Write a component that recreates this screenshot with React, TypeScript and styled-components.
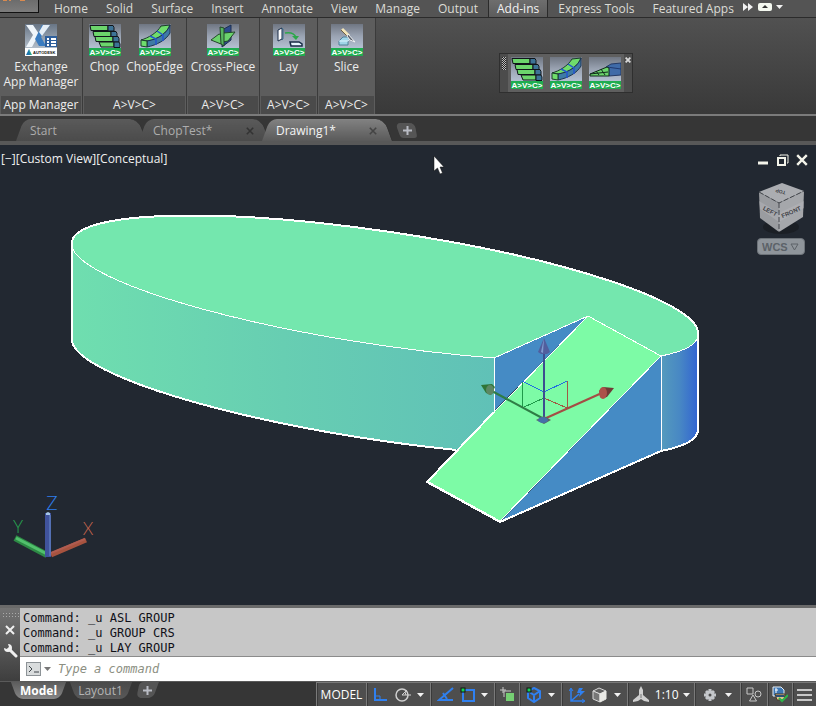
import React from "react";
import styled, { createGlobalStyle, css } from "styled-components";

const UI = `"Open Sans", "Noto Sans", sans-serif`;

const GlobalStyle = createGlobalStyle`
  * { box-sizing: border-box; }
  body { margin: 0; background: #363636; }
  button, input, select { font: inherit; color: inherit; border: 0; padding: 0; margin: 0; background: none; }
`;

const Page = styled.div`
  display: flex;
  flex-direction: column;
  min-height: 100vh;
  overflow: hidden;
  background: #363636;
  color: #e6e6e6;
  font-family: ${UI};
  font-size: 12px;
  line-height: 15px;
`;

/* ---------- ribbon tabs ---------- */

const MenuBar = styled.nav`
  display: flex;
  align-items: stretch;
  height: 18px;
  margin-bottom: -1px;
  background: #545454;
  border-bottom: 1px solid #2b2b2b;
`;

const AppButton = styled.button`
  display: flex;
  align-items: flex-start;
  width: 39px;
  height: 13px;
  margin-right: 6px;
  background: linear-gradient(#6c6c6c, #7c7c7c);
  border: solid #111;
  border-width: 0 1px 1px 0;
`;

const MenuTab = styled.button<{ $active?: boolean }>`
  padding: 0 9px;
  line-height: 17px;
  white-space: nowrap;
  color: #dcdcd6;
  ${(p) =>
    p.$active &&
    css`
      padding: 0 8px;
      margin: 0 1px;
      color: #f2f2f2;
      background: linear-gradient(#6e6e6e, #5c5c5c);
      border: solid #2b2b2b;
      border-width: 0 1px;
    `}
`;

const MenuTool = styled.button`
  display: flex;
  align-items: center;
  padding: 0 1px 4px 0;
`;

/* ---------- ribbon panels ---------- */

const Ribbon = styled.section`
  position: relative;
  display: flex;
  height: 97px;
  background: linear-gradient(#515151, #393939);
  border-top: 1px solid #2b2b2b;
`;

const Panel = styled.section<{ $w: number }>`
  display: flex;
  flex-direction: column;
  width: ${(p) => p.$w}px;
  background: #5d5d5d;
  border-right: 1px solid #3b3b3b;
`;

const PanelTools = styled.div`
  display: flex;
  flex: 1;
  justify-content: center;
  padding-top: 6px;
`;

const PanelTitle = styled.div`
  height: 18px;
  margin: 0 1px;
  line-height: 18px;
  text-align: center;
  white-space: nowrap;
  color: #ececec;
  background: #4a4a4a;
`;

const Tool = styled.button<{ $w?: number }>`
  display: flex;
  flex-direction: column;
  align-items: center;
  align-self: flex-start;
  gap: 3px;
  width: ${(p) => (p.$w ? p.$w + "px" : "auto")};
  line-height: 15px;
  white-space: pre;
  color: #ececec;
  svg { display: block; }
`;

const Palette = styled.div`
  position: absolute;
  left: 499px;
  top: 35px;
  display: flex;
  width: 134px;
  height: 40px;
  background: #5f5f5f;
  border: 1px solid #2f2f2f;
`;

const Grip = styled.div`
  width: 8px;
  padding: 3px 2px;
  background: #4c4c4c;
`;

const GripDots = styled.div`
  height: 13px;
  background: repeating-conic-gradient(#bdbdbd 0 25%, #222 0 50%) 0 0 / 2px 2px;
`;

const PaletteTools = styled.div`
  display: flex;
  flex: 1;
  gap: 7px;
  padding: 3px;
  svg { display: block; }
`;

const PaletteClose = styled.button`
  display: flex;
  width: 8px;
  padding-top: 3px;
  justify-content: center;
  background: #4c4c4c;
`;

/* ---------- document tabs ---------- */

const DocTabs = styled.nav`
  display: flex;
  align-items: flex-end;
  height: 31px;
  padding-left: 20px;
  background: #363636;
  border-top: 2px solid #7b7b7b;
  border-bottom: 4px solid #585858;
`;

const skewed = (bg: string, edge: string) => css`
  position: relative;
  isolation: isolate;
  &::before, &::after {
    content: "";
    position: absolute;
    z-index: -1;
    top: 0;
    bottom: 0;
    background: ${bg};
  }
  &::before { left: 0; right: 30%; ${edge} }
  &::after { left: 30%; right: 0; }
`;

const DocTab = styled.div<{ $active?: boolean }>`
  display: flex;
  align-items: center;
  justify-content: space-between;
  width: 123px;
  height: 22px;
  padding: 1px 10px 0 10px;
  color: ${(p) => (p.$active ? "#f4f4f4" : "#adadad")};
  ${(p) =>
    skewed(
      p.$active ? "linear-gradient(#828282, #5a5a5a)" : "linear-gradient(#5a5a5a, #4b4b4b)",
      "transform: skewX(-20deg); border-radius: 7px 0 0 0;"
    )}
  &::after { transform: skewX(20deg); border-radius: 0 9px 0 0; border-right: 1px solid #333; }
`;

const DocClose = styled.button`
  display: flex;
  padding: 2px;
`;

const AddDoc = styled.button`
  display: flex;
  align-items: center;
  justify-content: center;
  width: 18px;
  height: 15px;
  margin: 0 0 3px 9px;
  ${skewed("#555", "transform: skewX(20deg); border-radius: 5px 0 0 3px;")}
  &::after { transform: skewX(10deg); border-radius: 0 5px 3px 0; }
`;

/* ---------- viewport ---------- */

const Viewport = styled.main`
  position: relative;
  display: flex;
  flex: 1;
  min-height: 460px;
  background: #222831;
`;

const Scene = styled.svg`
  flex: 1;
  min-width: 0;
`;

const ViewLabels = styled.div`
  position: absolute;
  left: 1px;
  top: 6px;
  display: flex;
  color: #f0f0f0;
`;

const WindowTools = styled.div`
  position: absolute;
  right: 8px;
  top: 9px;
  display: flex;
  gap: 7px;
  button { display: flex; }
`;

const CubeBox = styled.div`
  position: absolute;
  right: 11px;
  top: 36px;
  display: flex;
  flex-direction: column;
  align-items: center;
  gap: 3px;
`;

const WcsField = styled.label`
  display: flex;
  align-items: center;
  width: 48px;
  height: 17px;
  padding: 0 5px 0 4px;
  border: 1px solid #6d7379;
  border-radius: 4px;
  background: #8f959b;
  color: #5c6268;
  font: bold 11px "Liberation Sans", sans-serif;
  svg { flex: none; }
`;

const WcsSelect = styled.select`
  flex: 1;
  min-width: 0;
  appearance: none;
`;

const Ucs = styled.svg`
  position: absolute;
  left: 8px;
  bottom: 42px;
`;

/* ---------- command line ---------- */

const CommandPanel = styled.section`
  display: flex;
  height: 76px;
  border-top: 3px solid #6a6a6a;
  color: #101018;
  font-family: "DejaVu Sans Mono", "Liberation Mono", monospace;
`;

const CommandSide = styled.div`
  display: flex;
  flex-direction: column;
  align-items: center;
  gap: 8px;
  width: 20px;
  padding-top: 4px;
  background: linear-gradient(#747474, #3e3e3e);
  button { display: flex; }
`;

const SideDots = styled.div`
  width: 17px;
  height: 5px;
  background: radial-gradient(#aaa 1px, transparent 1px) 0 0 / 3px 3px;
`;

const CommandMain = styled.div`
  display: flex;
  flex: 1;
  flex-direction: column;
`;

const History = styled.div`
  height: 49px;
  padding: 3px 3px 0;
  background: #c7c7c7;
  border-bottom: 1px solid #8b8b8b;
  white-space: pre;
`;

const Prompt = styled.form`
  display: flex;
  flex: 1;
  align-items: center;
  gap: 3px;
  padding-left: 6px;
  background: #fff;
  button { display: flex; align-items: center; gap: 3px; }
`;

const PromptInput = styled.input`
  flex: 1;
  min-width: 0;
  padding-left: 4px;
  font-style: italic;
  outline: 0;
  &::placeholder { color: #8c8f82; opacity: 1; }
`;

/* ---------- bottom bar ---------- */

const Bottom = styled.footer`
  display: flex;
  align-items: flex-start;
  height: 25px;
  padding-left: 14px;
  background: #363636;
  border-top: 1px solid #5a5a5a;
`;

const LayoutTab = styled.button<{ $active?: boolean; $w: number }>`
  width: ${(p) => p.$w}px;
  height: 17px;
  margin-right: 10px;
  line-height: 16px;
  font-weight: ${(p) => (p.$active ? 700 : 400)};
  color: ${(p) => (p.$active ? "#fff" : "#b4b4b4")};
  ${(p) =>
    skewed(
      p.$active ? "linear-gradient(#5c5c5c, #868686)" : "linear-gradient(#4a4a4a, #585858)",
      "transform: skewX(20deg); border-radius: 0 0 0 6px;"
    )}
  &::after { transform: skewX(-20deg); border-radius: 0 0 6px 0; }
`;

const AddLayout = styled.button`
  display: flex;
  align-items: center;
  justify-content: center;
  width: 18px;
  height: 16px;
  ${skewed("#555", "transform: skewX(-12deg); border-radius: 4px 0 0 5px;")}
  &::after { transform: skewX(-20deg); border-radius: 0 0 5px 0; }
`;

const Status = styled.div`
  display: flex;
  align-self: stretch;
  margin-left: auto;
  background: #4e4e4e;
  border-top: 1px solid #7a7a7a;
`;

const StatusCell = styled.div<{ $w: number }>`
  display: flex;
  align-items: center;
  justify-content: space-evenly;
  width: ${(p) => p.$w}px;
  border: solid #7a7a7a;
  border-width: 0 0 0 1px;
  box-shadow: inset 1px 0 #3a3a3a;
  color: #fff;
  font-size: 12px;
  button { display: flex; align-items: center; gap: 4px; }
`;

/* ---------- drawings ---------- */

const Plus = () => (
  <svg width="9" height="9" viewBox="0 0 9 9">
    <path d="M4.500 0v9M0 4.500h9" stroke="#b9bcc4" strokeWidth="2" />
  </svg>
);

const Cross = ({ size, color, w = 2 }: { size: number; color: string; w?: number }) => (
  <svg width={size} height={size} viewBox="0 0 10 10">
    <path d="M1 1l8 8M9 1l-8 8" stroke={color} strokeWidth={w} />
  </svg>
);

const Caret = ({ color = "#f2f2f2" }: { color?: string }) => (
  <svg width="7" height="4" viewBox="0 0 7 4">
    <path d="M0 0h7L3.500 4z" fill={color} />
  </svg>
);

const Tile = ({ id, children }: { id: string; children: React.ReactNode }) => (
  <svg width="32" height="32" viewBox="0 0 32 32">
    <defs>
      <linearGradient id={id} x1="0" y1="0" x2="0" y2="1">
        <stop offset="0" stopColor="#6f7682" />
        <stop offset="0.5" stopColor="#9aa3b2" />
        <stop offset="1" stopColor="#b4c0d2" />
      </linearGradient>
    </defs>
    <rect width="32" height="24" fill={`url(#${id})`} />
    {children}
    <rect y="24" width="32" height="8" fill="#1fac50" />
    <text x="16" y="31" textAnchor="middle" fill="#fff" fontFamily="Liberation Sans, sans-serif" fontSize="8" fontWeight="700">
      A&gt;V&gt;C&gt;
    </text>
  </svg>
);

const ChopIcon = ({ id }: { id: string }) => (
  <Tile id={id}>
    <g stroke="#10151a" strokeWidth="1">
      {[
        [1, 1.5],
        [4, 7.5],
        [6, 12.5],
        [10, 18],
      ].map(([x, y]) => (
        <g key={y}>
          <path d={`M${x} ${y}h${x > 8 ? 15 : 18}v5h-${x > 8 ? 13 : 17}z`} fill="#6cd56c" />
          <path d={`M${x > 8 ? 25 : x + 18} ${y}h5l1 2v3.500h-6z`} fill="#3d7396" />
        </g>
      ))}
    </g>
  </Tile>
);

const ChopEdgeIcon = ({ id }: { id: string }) => (
  <Tile id={id}>
    <path d="M2 16C9 14 18 9 22 2l9-1C28 9 20 15 9 17z" fill="#6fdd6c" stroke="#1b3b2b" />
    <path d="M31 1v8C27 16 18 21 8 23v-6C20 15 28 9 31 1z" fill="#3f7ba5" stroke="#1e3350" />
    <path d="M2 16l6 1v6l-6-1z" fill="#6fdd6c" stroke="#1b3b2b" />
    <path d="M11 12l6 3v6M18 7l6 4v6" fill="none" stroke="#2456d0" strokeWidth="1.500" />
  </Tile>
);

const CrossIcon = () => (
  <Tile id="t-cross">
    <path d="M15 6l9-5v15l-9 7z" fill="#2d4a8c" stroke="#1c3050" />
    <path d="M4 16l8-6 3 1v6l-1 3z" fill="#6bd46c" stroke="#24452a" />
    <path d="M15 11l2-2 11-1-7 9-6 1z" fill="#6bd46c" stroke="#24452a" />
    <path d="M13 3l4 1v18l-3-2z" fill="#57b660" stroke="#24452a" />
  </Tile>
);

const LayIcon = () => (
  <Tile id="t-lay">
    <path d="M5 6l4-2v11l-4 2z" fill="#fff" stroke="#182b46" />
    <path d="M9 4l1 1v10l-1 1" fill="none" stroke="#3f6f8e" />
    <path d="M17 18h9l3 2v2H18z" fill="#e6f6ff" stroke="#182b46" strokeWidth="1.500" />
    <path d="M12 9c5-1 9 0 11 4" fill="none" stroke="#2da84a" strokeWidth="1.500" />
    <path d="M19 12h7l-3 4z" fill="#2da84a" />
  </Tile>
);

const SliceIcon = () => (
  <Tile id="t-slice">
    <path d="M8 17l4-4h8l-3 4v4H8z" fill="#9fd5e8" stroke="#4c8097" />
    <path d="M8 17h9l3-4" fill="none" stroke="#dff6ff" />
    <path d="M11 5l7 7" stroke="#f3e6b8" strokeWidth="3" />
    <path d="M10 6l7 7" stroke="#6e6041" />
    <path d="M17 10l7 8-5-2-3-4z" fill="#555c68" stroke="#f3f3f3" />
  </Tile>
);

const RampIcon = () => (
  <Tile id="t-ramp">
    <path d="M17 10l5-3 10-1v12l-12 1z" fill="#3f6ba8" stroke="#233a66" />
    <path d="M18 10l14 2" stroke="#203a70" />
    <path d="M1 17l17-7 2 1v8L1 19z" fill="#6bd46c" stroke="#10281a" />
    <path d="M1 17l18-2M7 14l3 4M12 12l4 6" stroke="#10281a" />
  </Tile>
);

const ExchangeIcon = () => (
  <svg width="32" height="32" viewBox="0 0 32 32">
    <defs>
      <linearGradient id="exch" x1="0" y1="0" x2="0" y2="1">
        <stop offset="0" stopColor="#687585" />
        <stop offset="1" stopColor="#b2bdc9" />
      </linearGradient>
    </defs>
    <rect width="32" height="24" fill="url(#exch)" />
    <path d="M1 1h7l6 9-7 13H1l7-12z" fill="#eff5fa" />
    <path d="M17 1h8l-9 12 5 9h-7l-4-7z" fill="#3a7cc0" />
    <path d="M18 1h7l-8 11-3-4z" fill="#e5eef6" />
    <rect x="20" y="12" width="12" height="11" fill="#2e5f9c" />
    <path d="M22 15h2m2 0h5M22 18h2m2 0h5M22 21h2m2 0h5" stroke="#fff" strokeWidth="2" />
    <rect y="24" width="32" height="8" fill="#fff" />
    <path d="M1 31l3-6 2 6z" fill="#1d75ad" />
    <path d="M4 25l3 6H5z" fill="#2aa58a" />
    <text x="8" y="30" fill="#111" fontFamily="Liberation Sans, sans-serif" fontSize="4" fontWeight="700">
      AUTODESK
    </text>
  </svg>
);

const RADII = "316.300 56.200 8.450";
/* Clockwise and counter-clockwise runs along the cylinder's rim. */
const cw = (to: string) => `A${RADII} 0 1 ${to}`;
const ccw = (to: string) => `A${RADII} 0 0 ${to}`;

const Model = () => (
  <Scene viewBox="0 145 816 460" preserveAspectRatio="xMidYMid meet" role="img" aria-label="Cylinder with ramp">
    <defs>
      <linearGradient id="side" gradientUnits="userSpaceOnUse" x1="72" y1="0" x2="494" y2="0">
        <stop offset="0" stopColor="#6fdeaf" />
        <stop offset="0.500" stopColor="#67ceb2" />
        <stop offset="1" stopColor="#60c1b7" />
      </linearGradient>
      <linearGradient id="end" gradientUnits="userSpaceOnUse" x1="661" y1="0" x2="698" y2="0">
        <stop offset="0" stopColor="#559bbd" />
        <stop offset="0.500" stopColor="#4888c4" />
        <stop offset="1" stopColor="#3264d2" />
      </linearGradient>
    </defs>
    <path d={`M72 242V338${ccw("494 453")}V358${cw("72 242")}z`} fill="url(#side)" />
    <path d={`M661 356V451${ccw("698 429")}V334${cw("661 356")}z`} fill="url(#end)" />
    <path d={`M72 242${cw("698 334")}${cw("661 356")}L588 316L494 358${cw("72 242")}z`} fill="#74e7ae" />
    <path d="M494 358L588 316L494 411z" fill="#458bc5" />
    <path d="M661 356V451L500 522z" fill="#458bc5" />
    <path d="M588 316L661 356L500 521L427 481z" fill="#7dfba6" />
    <g fill="none" stroke="#fff" shapeRendering="crispEdges">
      <path d={`M72 242${ccw("494 358")}L588 316L661 356${ccw("698 334")}`} />
      <path d="M494 358V411M661 356V451M588 316L427 481M661 356L500 521L427 481" />
      <path
        strokeWidth="2"
        d={`M456 450${cw("72 338")}V242${cw("698 334")}V429${cw("661 451")}L500 522L427 482L494 412`}
      />
    </g>
    <g fill="none" strokeWidth="1" shapeRendering="crispEdges">
      <path d="M522 408V381M522 408l22-10" stroke="#1f9a4a" />
      <path d="M522 381l22 11 23-11" stroke="#2170e0" />
      <path d="M567 381v27l-23-10" stroke="#a05a44" />
    </g>
    <path d="M544 419L604 392" stroke="#a44c44" strokeWidth="2" />
    <path d="M614 388l-11-1-4 4 3 7 5-1z" fill="#6f3b36" />
    <ellipse cx="603" cy="393" rx="4" ry="6" fill="#ac5149" />
    <path d="M544 419L490 390" stroke="#2e7d45" strokeWidth="2" />
    <path d="M481 385l11-1 3 3-4 8-5-2z" fill="#2f7536" />
    <ellipse cx="490" cy="390" rx="4" ry="5" fill="#5c8763" />
    <path d="M544 419V350" stroke="#3d4e90" strokeWidth="2" />
    <path d="M544 338l6 14-3 2-6 0-3-2z" fill="#515e9e" />
    <path d="M544 338l-1 15-2-1z" fill="#7f9bd0" />
    <path d="M536 420l8-4 7 4-7 4z" fill="#5a6560" />
    <ellipse cx="543" cy="420" rx="5" ry="3" fill="#456fa8" />
    <path d="M434 156v15l3.500-3 2.500 6 2.500-1-2.500-6h4z" fill="#fff" stroke="#111" strokeWidth="0.500" />
  </Scene>
);

const UcsIcon = () => (
  <Ucs width="90" height="68" viewBox="8 494 90 68">
    <g strokeLinecap="butt">
      <path d="M15 537L47 554" stroke="#2d8a45" strokeWidth="6" />
      <path d="M16 537L47 553" stroke="#52c06d" strokeWidth="3" />
      <path d="M51 554L86 539" stroke="#a7533f" strokeWidth="5" />
      <path d="M51 552L85 538" stroke="#b05c50" strokeWidth="2" />
      <path d="M48 512V556" stroke="#40539c" strokeWidth="6" />
      <path d="M50 514V555" stroke="#5470b4" strokeWidth="2" />
      <path d="M46 512l2-1 2 1v2h-4z" fill="#a6c6e8" />
    </g>
    <g fontFamily="Lato, sans-serif" fontWeight="300" textAnchor="middle">
      <text x="52" y="509" fontSize="19" fill="#2f7fec">Z</text>
      <text x="18" y="532" fontSize="17" fill="#27a852">Y</text>
      <text x="88" y="534" fontSize="17" fill="#c8664e">X</text>
    </g>
  </Ucs>
);

const Cube = () => (
  <svg width="48" height="54" viewBox="757 181 48 54">
    <ellipse cx="781" cy="227" rx="18" ry="7" fill="#1b1f25" />
    <path d="M782 183l22 8-25 12-20-11z" fill="#abadb1" />
    <path d="M759 192l20 11v29l-19-14z" fill="#9a9ca0" />
    <path d="M804 191l-25 12v29l24-15z" fill="#a5a7ab" />
    <path d="M759 201l20 12 25-12v7l-25 14-19-13z" fill="#b8b9bc" opacity="0.450" />
    <path d="M759 192l20 11 25-12M779 203v29" fill="none" stroke="#44474c" strokeDasharray="5 2" />
    <g fill="#3f4247" fontFamily="Liberation Sans, sans-serif" fontWeight="700" textAnchor="middle">
      <text fontSize="6" transform="translate(769 213) rotate(28)">LEFT</text>
      <text fontSize="6" transform="translate(792 214) rotate(-24)">FRONT</text>
      <text fontSize="5" transform="translate(781 190) rotate(195)">TOP</text>
    </g>
  </svg>
);

const B = "#2f80f0";
const Ortho = () => (
  <svg width="15" height="15" viewBox="0 0 15 15" fill="none" stroke={B}>
    <path d="M2 1v12h12" strokeWidth="2" />
    <path d="M3 9h4v4" />
  </svg>
);
const Polar = () => (
  <svg width="16" height="16" viewBox="0 0 16 16" fill="none" stroke="#d0d0d0">
    <circle cx="7" cy="8" r="6" strokeWidth="1.500" />
    <path d="M7 8h9M7 8l5-5M10 5l1 3" />
  </svg>
);
const Iso = () => (
  <svg width="17" height="15" viewBox="0 0 17 15" fill="none" stroke={B}>
    <path d="M16 1L2 13h14" strokeWidth="2" />
    <path d="M6 6l4 6" strokeWidth="2" />
  </svg>
);
const Snap = () => (
  <svg width="16" height="16" viewBox="0 0 16 16" fill="none">
    <rect x="3" y="3" width="11" height="11" stroke={B} strokeWidth="2" />
    <rect x="1" y="1" width="4" height="4" fill="#17d152" stroke="#111" />
  </svg>
);
const Cycle = () => (
  <svg width="15" height="15" viewBox="0 0 15 15">
    <path d="M3 0v6M0 3h6M4 10V4h7" fill="none" stroke="#c8c8c8" />
    <rect x="6" y="6" width="8" height="8" fill="#76cf73" />
  </svg>
);
const Snap3d = () => (
  <svg width="16" height="16" viewBox="0 0 16 16" fill="none">
    <path d="M8 1l6 3v7l-6 4-6-4V4zM2 4l6 4 6-4M8 8v7" stroke={B} strokeWidth="2" />
    <rect x="1" y="1" width="4" height="4" fill="#17d152" stroke="#111" />
  </svg>
);
const DynUcs = () => (
  <svg width="17" height="16" viewBox="0 0 17 16" fill="none" stroke={B}>
    <path d="M2 2v12h13M2 14l8-7" strokeWidth="1.500" />
    <path d="M0 4l2-3 2 3M13 12l3 2-3 2" />
    <path d="M10 1h4l-2 3h4l-6 6 1-4H8z" fill={B} stroke="none" />
  </svg>
);
const Filter = () => (
  <svg width="15" height="16" viewBox="0 0 15 16">
    <path d="M7 1l7 3-6 3-7-3z" fill="#626262" stroke="#d8d8d8" />
    <path d="M1 4l7 3v8l-7-3z" fill="#777" stroke="#d8d8d8" />
    <path d="M14 4l-6 3v8l6-3z" fill="#e9e9e5" stroke="#e9e9e5" />
  </svg>
);
const Annot = () => (
  <svg width="18" height="17" viewBox="0 0 18 17">
    <path d="M9 0l2 4v5l6 5v2l-5-1-3-2-3 2-5 1v-2l6-5V4z" fill="#cfcfcf" />
    <path d="M9 8v4" stroke="#777" />
  </svg>
);
const Gear = () => (
  <svg width="14" height="14" viewBox="0 0 14 14">
    <path
      d="M7 1v12M1 7h12M3 3l8 8M11 3l-8 8"
      stroke="#c4c7cb"
      strokeWidth="3"
    />
    <circle cx="7" cy="7" r="4.500" fill="#c4c7cb" />
    <circle cx="7" cy="7" r="1.500" fill="#4e4e4e" />
  </svg>
);
const Monitor = () => (
  <svg width="16" height="16" viewBox="0 0 16 16" fill="none" stroke="#c8c8c8">
    <path d="M1 1h6v6H1zM7 8l3.500 6h-7z" />
    <circle cx="12" cy="7" r="3" />
  </svg>
);
const Perf = () => (
  <svg width="16" height="17" viewBox="0 0 16 17">
    <path d="M1 1h8l3 3v6H1z" fill="#3c76b4" stroke="#e9eef4" />
    <path d="M3 4h3M4 2v5" stroke="#fff" />
    <path d="M3 8h10l-1 6H5z" fill="#e0c48e" stroke="#4a3c2a" />
    <path d="M4 10h8" stroke="#2b4d77" strokeWidth="2" />
    <path d="M7 12l3 3 6-6" fill="none" stroke="#2cb34a" strokeWidth="2" />
  </svg>
);

/* ---------- page ---------- */

export default function App() {
  return (
    <Page>
      <GlobalStyle />
      <MenuBar>
        <AppButton aria-label="Application menu">
          <svg width="38" height="2" viewBox="0 0 38 2">
            <path d="M3 0h4M9 0h2M20 0h5" stroke="#d98a4f" strokeWidth="2" />
          </svg>
        </AppButton>
        {["Home", "Solid", "Surface", "Insert", "Annotate", "View", "Manage", "Output", "Add-ins", "Express Tools", "Featured Apps"].map((t) => (
          <MenuTab key={t} $active={t === "Add-ins"}>
            {t}
          </MenuTab>
        ))}
        <MenuTool aria-label="More tabs">
          <svg width="10" height="8" viewBox="0 0 10 8">
            <path d="M0 0l5 4-5 4zM5 0l5 4-5 4z" fill="#f2f2f2" />
          </svg>
        </MenuTool>
        <MenuTool aria-label="Minimize ribbon">
          <svg width="22" height="8" viewBox="0 0 22 8">
            <rect x="4" width="14" height="8" rx="2" fill="#f4f8f0" />
            <path d="M8 5l3-3 3 3z" fill="#333" />
          </svg>
          <Caret />
        </MenuTool>
      </MenuBar>

      <Ribbon>
        <Panel $w={83}>
          <PanelTools>
            <Tool>
              <ExchangeIcon />
              {"Exchange\nApp Manager"}
            </Tool>
          </PanelTools>
          <PanelTitle>App Manager</PanelTitle>
        </Panel>
        <Panel $w={104}>
          <PanelTools>
            <Tool $w={40}>
              <ChopIcon id="t-chop" />
              Chop
            </Tool>
            <Tool $w={60}>
              <ChopEdgeIcon id="t-edge" />
              ChopEdge
            </Tool>
          </PanelTools>
          <PanelTitle>A&gt;V&gt;C&gt;</PanelTitle>
        </Panel>
        <Panel $w={73}>
          <PanelTools>
            <Tool>
              <CrossIcon />
              Cross-Piece
            </Tool>
          </PanelTools>
          <PanelTitle>A&gt;V&gt;C&gt;</PanelTitle>
        </Panel>
        <Panel $w={58}>
          <PanelTools>
            <Tool>
              <LayIcon />
              Lay
            </Tool>
          </PanelTools>
          <PanelTitle>A&gt;V&gt;C&gt;</PanelTitle>
        </Panel>
        <Panel $w={58}>
          <PanelTools>
            <Tool>
              <SliceIcon />
              Slice
            </Tool>
          </PanelTools>
          <PanelTitle>A&gt;V&gt;C&gt;</PanelTitle>
        </Panel>
        <Palette>
          <Grip>
            <GripDots />
          </Grip>
          <PaletteTools>
            <Tool aria-label="Chop">
              <ChopIcon id="p-chop" />
            </Tool>
            <Tool aria-label="ChopEdge">
              <ChopEdgeIcon id="p-edge" />
            </Tool>
            <Tool aria-label="Ramp">
              <RampIcon />
            </Tool>
          </PaletteTools>
          <PaletteClose aria-label="Close toolbar">
            <Cross size={6} color="#d8d8d8" w={3} />
          </PaletteClose>
        </Palette>
      </Ribbon>

      <DocTabs>
        <DocTab>Start</DocTab>
        <DocTab>
          ChopTest*
          <DocClose aria-label="Close ChopTest">
            <Cross size={8} color="#333" />
          </DocClose>
        </DocTab>
        <DocTab $active>
          Drawing1*
          <DocClose aria-label="Close Drawing1">
            <Cross size={8} color="#444" />
          </DocClose>
        </DocTab>
        <AddDoc aria-label="New drawing">
          <Plus />
        </AddDoc>
      </DocTabs>

      <Viewport>
        <Model />
        <ViewLabels>
          <button>[−]</button>
          <button>[Custom View]</button>
          <button>[Conceptual]</button>
        </ViewLabels>
        <WindowTools>
          <button aria-label="Minimize">
            <svg width="12" height="12" viewBox="0 0 12 12">
              <path d="M1 9h10" stroke="#f4f4ea" strokeWidth="3" />
            </svg>
          </button>
          <button aria-label="Restore">
            <svg width="13" height="12" viewBox="0 0 13 12" fill="none" stroke="#f4f4ea">
              <path d="M4 2V1h8v8h-1" />
              <rect x="2" y="4" width="7" height="7" strokeWidth="2" />
            </svg>
          </button>
          <button aria-label="Close">
            <Cross size={12} color="#f4f4ea" />
          </button>
        </WindowTools>
        <CubeBox>
          <Cube />
          <WcsField>
            <WcsSelect aria-label="Coordinate system">
              <option>WCS</option>
            </WcsSelect>
            <svg width="9" height="8" viewBox="0 0 9 8">
              <path d="M1 1h7L4.500 7z" fill="none" stroke="#5c6268" />
            </svg>
          </WcsField>
        </CubeBox>
        <UcsIcon />
      </Viewport>

      <CommandPanel>
        <CommandSide>
          <SideDots />
          <button aria-label="Close command line">
            <Cross size={10} color="#f0f0f0" />
          </button>
          <button aria-label="Customize">
            <svg width="15" height="15" viewBox="0 0 15 15">
              <path d="M6 6l7 7" stroke="#f0f0f0" strokeWidth="3" strokeLinecap="round" />
              <path d="M5 1a4 4 0 1 1-4 4l3 1 2-2z" fill="#f0f0f0" />
            </svg>
          </button>
        </CommandSide>
        <CommandMain>
          <History>{"Command: _u ASL GROUP\nCommand: _u GROUP CRS\nCommand: _u LAY GROUP"}</History>
          <Prompt onSubmit={(e) => e.preventDefault()}>
            <button type="button" aria-label="Recent commands">
              <svg width="15" height="14" viewBox="0 0 15 14">
                <rect x="0.500" y="0.500" width="14" height="13" fill="#d9dcdd" stroke="#8d9397" />
                <path d="M3 4l3 3-3 3M8 10h5" fill="none" stroke="#3c4348" />
              </svg>
              <Caret color="#777" />
            </button>
            <PromptInput aria-label="Command" placeholder="Type a command" />
          </Prompt>
        </CommandMain>
      </CommandPanel>

      <Bottom>
        <LayoutTab $active $w={49}>
          Model
        </LayoutTab>
        <LayoutTab $w={55}>Layout1</LayoutTab>
        <AddLayout aria-label="New layout">
          <Plus />
        </AddLayout>
        <Status>
          <StatusCell $w={50}>
            <button>MODEL</button>
          </StatusCell>
          <StatusCell $w={64}>
            <button aria-label="Ortho"><Ortho /></button>
            <button aria-label="Polar tracking"><Polar /></button>
            <button aria-label="Polar settings"><Caret /></button>
          </StatusCell>
          <StatusCell $w={64}>
            <button aria-label="Snap tracking"><Iso /></button>
            <button aria-label="Object snap"><Snap /></button>
            <button aria-label="Snap settings"><Caret /></button>
          </StatusCell>
          <StatusCell $w={25}>
            <button aria-label="Selection cycling"><Cycle /></button>
          </StatusCell>
          <StatusCell $w={42}>
            <button aria-label="3D object snap"><Snap3d /></button>
            <button aria-label="3D snap settings"><Caret /></button>
          </StatusCell>
          <StatusCell $w={66}>
            <button aria-label="Dynamic UCS"><DynUcs /></button>
            <button aria-label="Selection filter"><Filter /></button>
            <button aria-label="Filter settings"><Caret /></button>
          </StatusCell>
          <StatusCell $w={67}>
            <button aria-label="Annotation visibility"><Annot /></button>
            <button>
              1:10 <Caret />
            </button>
          </StatusCell>
          <StatusCell $w={46}>
            <button aria-label="Workspace"><Gear /></button>
            <button aria-label="Workspace settings"><Caret /></button>
          </StatusCell>
          <StatusCell $w={27}>
            <button aria-label="Isolate objects"><Monitor /></button>
          </StatusCell>
          <StatusCell $w={25}>
            <button aria-label="Graphics performance"><Perf /></button>
          </StatusCell>
          <StatusCell $w={24}>
            <button aria-label="Customization">
              <svg width="15" height="12" viewBox="0 0 15 12">
                <path d="M0 1h15M0 6h15M0 11h15" stroke="#c8c8c8" strokeWidth="2" />
              </svg>
            </button>
          </StatusCell>
        </Status>
      </Bottom>
    </Page>
  );
}
